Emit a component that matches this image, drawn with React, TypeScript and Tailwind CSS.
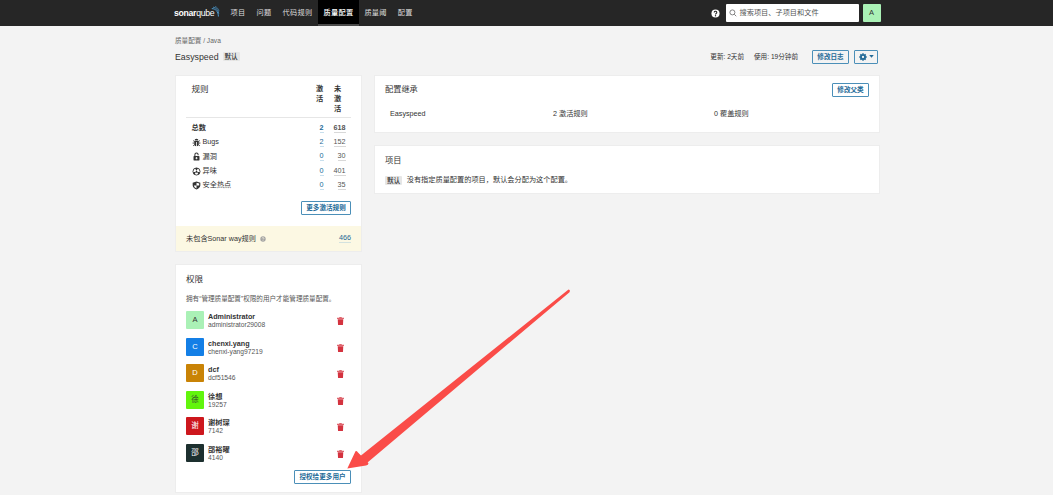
import React from 'react';

const navItems = [
  { label: '项目' },
  { label: '问题' },
  { label: '代码规则' },
  { label: '质量配置', active: true },
  { label: '质量阈' },
  { label: '配置' },
];

const users = [
  { name: 'Administrator', login: 'administrator29008', letter: 'A', color: 'bg-[#aaf1b6] text-[#333]' },
  { name: 'chenxi.yang', login: 'chenxi-yang97219', letter: 'C', color: 'bg-[#147fe6] text-white' },
  { name: 'dcf', login: 'dcf51546', letter: 'D', color: 'bg-[#c98306] text-white' },
  { name: '徐想', login: '19257', letter: '徐', color: 'bg-[#62f50c] text-[#333]' },
  { name: '谢树琛', login: '7142', letter: '谢', color: 'bg-[#cd171d] text-white' },
  { name: '邵裕曜', login: '4140', letter: '邵', color: 'bg-[#1d302f] text-white' },
];

function BugIcon() {
  return (
    <svg viewBox="0 0 16 16" className="h-[9px] w-[9px]" fill="#333">
      <path d="M4.500 4.500a3.500 3.300 0 0 1 7 0z" />
      <path d="M4 5.300h8V11a3.500 3.500 0 0 1-3.300 3.500V7H7.300v7.500A3.500 3.500 0 0 1 4 11z" />
      <path d="M1 9h3M12 9h3M2 4.500l2.500 2M14 4.500l-2.500 2M2 14l2.500-2.200M14 14l-2.500-2.200" stroke="#333" strokeWidth="1.500" />
    </svg>
  );
}

function VulnerabilityIcon() {
  return (
    <svg viewBox="0 0 16 16" className="h-[9px] w-[9px]" fill="#333">
      <path fillRule="evenodd" d="M4.200 7V4.700a3.800 3.700 0 0 1 7.600 0V5.700H10V4.700a2 2 0 0 0-4 0V7h6.500a.8.8 0 0 1 .8.800V14.200a.8.8 0 0 1-.8.800H3.500a.8.8 0 0 1-.8-.8V7.800a.8.8 0 0 1 .8-.8zM7.300 9v1.300H6v1.400h1.300V13h1.400v-1.300H10v-1.400H8.700V9z" />
    </svg>
  );
}

function SmellIcon() {
  return (
    <svg viewBox="0 0 16 16" className="h-[9px] w-[9px]">
      <circle cx="8" cy="8" r="6.300" fill="none" stroke="#333" strokeWidth="1.600" />
      <path fill="#333" d="M8 6.600 5.300 2.400Q8 1.300 10.700 2.400zM6.800 9H2.200Q2.500 12 4.600 13.200zM9.200 9h4.600Q13.500 12 11.400 13.200z" />
      <circle cx="8" cy="8.300" r="1.700" fill="#333" />
    </svg>
  );
}

function HotspotIcon() {
  return (
    <svg viewBox="0 0 16 16" className="h-[9px] w-[9px]">
      <path fill="#333" fillRule="evenodd" d="M8 1 14.800 3V8Q14.300 12.500 8 15.200 1.700 12.500 1.200 8V3zM8 3.100V8h4.800V4.600zM8 8H3.200Q3.700 11.200 8 13.300z" />
    </svg>
  );
}

function HelpIcon({ className, fill, mark }: { className: string; fill: string; mark: string }) {
  return (
    <svg viewBox="0 0 16 16" className={className}>
      <circle cx="8" cy="8" r="7.200" fill={fill} />
      <path d="M5.700 6.300a2.300 2.100 0 1 1 3.500 1.700Q8 8.600 8 9.700" fill="none" stroke={mark} strokeWidth="1.900" />
      <circle cx="8" cy="12" r="1.200" fill={mark} />
    </svg>
  );
}

function TrashIcon() {
  return (
    <svg viewBox="0 0 14 16" className="h-[8px] w-[7px]" fill="#d4333f">
      <path d="M4.500 0h5v1.500H14V4H0V1.500h4.500z" opacity=".75" />
      <path d="M1.500 4.500h11L12 15a1 1 0 0 1-1 1H3a1 1 0 0 1-1-1z" />
    </svg>
  );
}

function GearIcon() {
  return (
    <svg viewBox="0 0 16 16" className="h-[8px] w-[8px]">
      <path d="M8 .5v15M.5 8h15M2.700 2.700l10.600 10.600M13.300 2.700 2.700 13.300" stroke="#236a97" strokeWidth="3" />
      <circle cx="8" cy="8" r="4" fill="#f3f3f3" stroke="#236a97" strokeWidth="3.400" />
    </svg>
  );
}

function Logo() {
  return (
    <div className="flex h-[14px] w-[46px] items-start justify-between">
      <span className="mt-[2px] flex w-[39px] text-[8.700px] leading-[11px] tracking-[-0.300px] text-white">
        <b>sonar</b>
        <span>qube</span>
      </span>
      <svg viewBox="0 0 8 11" className="-ml-[2px] h-[11px] w-[9px] shrink-0" fill="none" stroke="#4c9bd0">
        <path d="M.3 2.600C4 2.600 6.800 5.500 6.900 10.500" strokeWidth="1" />
        <path d="M1.500 1.100C5 1.600 7 4.500 7.300 7.800" strokeWidth=".8" />
        <path d="M3.500.4C5.700 1.300 7 3 7.600 5.200" strokeWidth=".6" />
      </svg>
    </div>
  );
}

function Button({ children, className = '' }: { children: React.ReactNode; className?: string }) {
  return (
    <button
      className={`flex h-[14px] shrink-0 items-center justify-center whitespace-nowrap rounded-[1px] border border-[#4b8fb8] text-[6.6px] font-bold leading-[12px] text-[#236a97] ${className}`}
    >
      {children}
    </button>
  );
}

function Badge() {
  return (
    <span className="flex h-[9px] items-center rounded-[1px] bg-[#e6e6e6] px-[2px] text-[6.6px] font-medium leading-[9px] text-[#333]">
      默认
    </span>
  );
}

function RuleRow({
  icon,
  label,
  active,
  inactive,
  bold = false,
}: {
  icon?: React.ReactNode;
  label: string;
  active: string;
  inactive: string;
  bold?: boolean;
}) {
  return (
    <div className={`flex h-[14.3px] items-center pl-[5.500px] pr-[5.500px] ${bold ? 'font-bold' : ''}`}>
      {icon}
      <span className={`flex-1 ${icon ? 'ml-[2px]' : ''}`}>{label}</span>
      <span className="border-b border-[#c7dfed] leading-[8px] text-[#236a97]">{active}</span>
      <span className="flex w-[22px] justify-end">
        <span className="border-b border-[#d8d8d8] leading-[8px] text-[#555]">{inactive}</span>
      </span>
    </div>
  );
}

export default function App() {
  return (
    <div className="flex h-[495px] w-[1053px] flex-col overflow-hidden bg-[#f3f3f3] font-['Liberation_Sans','Noto_Sans_CJK_SC',sans-serif] text-[7.2px] leading-[10px] text-[#333]">
      <header className="flex h-[26px] shrink-0 items-center bg-[#262626] pl-[174px] pr-[172.500px]">
        <Logo />
        <nav className="ml-[5px] flex h-full tracking-[0.3px]">
          {navItems.map((item) => (
            <a
              key={item.label}
              className={`flex h-full items-center whitespace-nowrap border-b-2 px-[5.500px] pt-[2px] ${
                item.active ? 'border-[#4b4b4b] bg-black font-medium text-white' : 'border-transparent text-[#dedede]'
              }`}
            >
              {item.label}
            </a>
          ))}
        </nav>
        <div className="ml-auto flex items-center">
          <HelpIcon className="h-[9px] w-[9px]" fill="#fff" mark="#262626" />
          <div className="ml-[6px] flex h-[18px] w-[133px] items-center rounded-[1px] bg-white pl-[3px] text-[#555]">
            <svg viewBox="0 0 16 16" className="h-[8px] w-[8px]" fill="none" stroke="#666" strokeWidth="1.600">
              <circle cx="6.800" cy="6.800" r="5" />
              <path d="m10.500 10.500 4 4" />
            </svg>
            <span className="ml-[3px]">搜索项目、子项目和文件</span>
          </div>
          <div className="ml-[4px] flex h-[18px] w-[18px] items-center justify-center rounded-[1px] bg-[#aaf1b6] text-[7.500px]">
            A
          </div>
        </div>
      </header>

      <main className="flex w-[880px] flex-col pl-[175px]">
        <div className="mt-[10px] h-[10px] text-[6.6px] text-[#666]">质量配置 / Java</div>
        <div className="flex h-[21px] items-center">
          <h1 className="text-[8.8px]">Easyspeed</h1>
          <div className="ml-[4px]">
            <Badge />
          </div>
          <div className="ml-auto flex items-center text-[6.6px]">
            <span>更新: 2天前</span>
            <span className="ml-[10px]">使用: 19分钟前</span>
            <Button className="ml-[14px] w-[37px]">修改日志</Button>
            <Button className="ml-[5px] mr-[2px] w-[24px] gap-[2px]">
              <GearIcon />
              <svg viewBox="0 0 6 4" className="h-[3px] w-[5px]" fill="#236a97">
                <path d="M0 0h6L3 3.500z" />
              </svg>
            </Button>
          </div>
        </div>

        <div className="mt-[8px] flex items-start gap-[12px]">
          <aside className="flex w-[187px] flex-col gap-[12px]">
            <section className="flex h-[177px] flex-col border border-[#ededed] bg-white">
              <div className="mx-[10px] flex h-[42px] border-b border-[#e6e6e6] pl-[5.500px] pt-[8px]">
                <h2 className="flex-1 text-[8.500px] leading-[11px]">规则</h2>
                <span className="w-[8px] font-bold leading-[10px]">激活</span>
                <span className="ml-[10px] mr-[9px] w-[8px] font-bold leading-[10px]">未激活</span>
              </div>
              <div className="mx-[10px] mt-[3px]">
                <RuleRow label="总数" active="2" inactive="618" bold />
                <RuleRow icon={<BugIcon />} label="Bugs" active="2" inactive="152" />
                <RuleRow icon={<VulnerabilityIcon />} label="漏洞" active="0" inactive="30" />
                <RuleRow icon={<SmellIcon />} label="异味" active="0" inactive="401" />
                <RuleRow icon={<HotspotIcon />} label="安全热点" active="0" inactive="35" />
              </div>
              <Button className="ml-auto mr-[10px] mt-[9px] w-[50px]">更多激活规则</Button>
              <div className="mt-auto flex h-[25px] items-center bg-[#fcf8e3] px-[10px]">
                <span>未包含Sonar way规则</span>
                <HelpIcon className="ml-[4px] h-[6px] w-[6px]" fill="#a3a3a3" mark="#fcf8e3" />
                <span className="ml-auto border-b border-[#d3e2df] leading-[8px] text-[#236a97]">466</span>
              </div>
            </section>

            <section className="flex h-[229px] flex-col border border-[#ededed] bg-white px-[10px]">
              <h2 className="mt-[8px] text-[8.500px] leading-[12px]">权限</h2>
              <p className="mt-[9px] whitespace-nowrap text-[6.6px] text-[#555]">
                拥有“管理质量配置”权限的用户才能管理质量配置。
              </p>
              <ul className="mt-[3px]">
                {users.map((user) => (
                  <li key={user.login} className="flex h-[26.500px] items-center">
                    <span
                      className={`flex h-[18px] w-[18px] items-center justify-center rounded-[1px] text-[7.500px] leading-[10px] ${user.color}`}
                    >
                      {user.letter}
                    </span>
                    <div className="ml-[4px] flex-1 pt-[2px] leading-[8px]">
                      <div className="h-[8px] font-bold">{user.name}</div>
                      <div className="h-[8px] text-[6.7px] text-[#555]">{user.login}</div>
                    </div>
                    <span className="mr-[7px] pt-[2px]">
                      <TrashIcon />
                    </span>
                  </li>
                ))}
              </ul>
              <Button className="ml-auto mt-[4px] w-[57px]">授权给更多用户</Button>
            </section>
          </aside>

          <div className="flex flex-1 flex-col gap-[12px]">
            <section className="h-[58px] border border-[#ededed] bg-white px-[10px]">
              <div className="mt-[7px] flex h-[14px] items-center justify-between">
                <h2 className="text-[8.2px]">配置继承</h2>
                <Button className="w-[37px]">修改父类</Button>
              </div>
              <div className="mt-[12px] flex pl-[5px]">
                <span className="w-[163px]">Easyspeed</span>
                <span className="w-[161px]">2 激活规则</span>
                <span>0 覆盖规则</span>
              </div>
            </section>
            <section className="h-[49px] border border-[#ededed] bg-white px-[10px]">
              <h2 className="mt-[9px] text-[8.2px] leading-[12px]">项目</h2>
              <div className="mt-[8px] flex items-center">
                <Badge />
                <span className="ml-[4.500px]">没有指定质量配置的项目，默认会分配为这个配置。</span>
              </div>
            </section>
          </div>
        </div>
      </main>

      <svg viewBox="0 0 224 182" className="pointer-events-none absolute left-[347px] top-[288px] h-[182px] w-[224px]">
        <path
          d="M.3 180.600 8.500 163.200Q9.500 162.500 11 164.500L14 167.500 221.500 1.500Q223.700 2 222.500 4.200L20.500 174.500 19.500 173 21.500 175.200Q21.500 177 19 177.500Z"
          fill="#fa4c48"
        />
      </svg>
    </div>
  );
}
